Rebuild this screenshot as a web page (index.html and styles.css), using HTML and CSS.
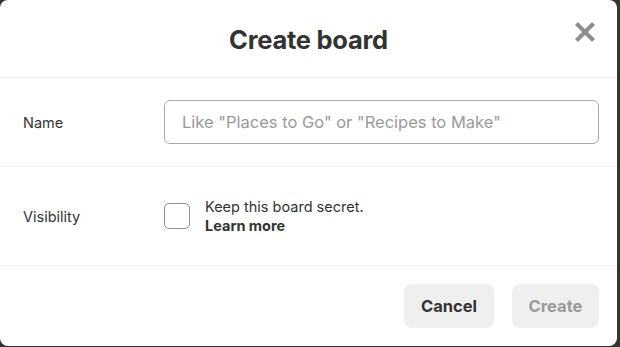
FILE: index.html
```html
<!DOCTYPE html>
<html lang="en">
<head>
<meta charset="utf-8">
<title>Create board</title>
<link rel="stylesheet" href="styles.css">
</head>
<body>
<div class="modal">
  <header class="modal-header">
    <h1 class="title">Create board</h1>
    <button class="close" aria-label="Close">
      <svg viewBox="0 0 24 24" width="24" height="24"><path d="M3.5 3.5 L20.5 20.5 M20.5 3.5 L3.5 20.5" stroke="#8e8e8e" stroke-width="4.2" stroke-linecap="butt" fill="none"/></svg>
    </button>
  </header>
  <div class="row row-name">
    <label class="label" for="name">Name</label>
    <input id="name" class="input" type="text" placeholder="Like &quot;Places to Go&quot; or &quot;Recipes to Make&quot;">
  </div>
  <div class="row row-vis">
    <span class="label">Visibility</span>
    <div class="check-group">
      <span class="checkbox"></span>
      <div class="check-text">
        <div>Keep this board secret.</div>
        <div class="learn">Learn more</div>
      </div>
    </div>
  </div>
  <footer class="modal-footer">
    <button class="btn btn-cancel">Cancel</button>
    <button class="btn btn-create">Create</button>
  </footer>
</div>
</body>
</html>
```
FILE: styles.css
```css
html, body {
  margin: 0;
  padding: 0;
}
body {
  background: #333;
  width: 620px;
  height: 347px;
  overflow: hidden;
  font-family: Inter, "Liberation Sans", sans-serif;
  color: #333;
}
.modal {
  width: 617px;
  height: 346px;
  background: #fff;
  border-radius: 8px;
  display: flex;
  flex-direction: column;
  position: relative;
}
.modal-header {
  height: 77px;
  display: flex;
  align-items: center;
  justify-content: center;
  border-bottom: 1px solid #efefef;
  box-sizing: content-box;
}
.title {
  margin: 0;
  font-size: 25.5px;
  font-weight: 700;
  color: #333;
  letter-spacing: -0.25px;
  padding-top: 2px;
}
.close {
  position: absolute;
  top: 20px;
  right: 20px;
  width: 24px;
  height: 24px;
  padding: 0;
  border: 0;
  background: none;
  display: flex;
}
.row {
  display: flex;
  align-items: center;
  padding: 0 18px 0 23px;
  border-bottom: 1px solid #efefef;
}
.row-name {
  height: 88px;
}
.row-vis {
  height: 98px;
}
.label {
  width: 141px;
  flex: none;
  font-size: 14.5px;
  color: #333;
}
.input {
  flex: 1;
  height: 44px;
  box-sizing: border-box;
  border: 1px solid #a9a9a9;
  border-radius: 6px;
  padding: 0 17px;
  font-family: Inter, "Liberation Sans", sans-serif;
  font-size: 16.5px;
  color: #333;
  outline: none;
}
.input::placeholder {
  color: #9a9a9a;
}
.check-group {
  display: flex;
  align-items: center;
  gap: 15px;
}
.checkbox {
  width: 26px;
  height: 26px;
  box-sizing: border-box;
  border: 1px solid #8e8e8e;
  border-radius: 5px;
  flex: none;
}
.check-text {
  font-size: 14.5px;
  line-height: 19px;
  color: #333;
}
.learn {
  font-weight: 700;
}
.modal-footer {
  flex: 1;
  display: flex;
  justify-content: flex-end;
  align-items: center;
  gap: 18px;
  padding: 0 18px 0 0;
}
.btn {
  height: 44px;
  border: 0;
  border-radius: 8px;
  background: #efefef;
  font-family: Inter, "Liberation Sans", sans-serif;
  font-size: 16.5px;
  font-weight: 700;
  padding: 0;
}
.btn-cancel {
  width: 90px;
  color: #333;
}
.btn-create {
  width: 87px;
  color: #9a9a9a;
}
```
